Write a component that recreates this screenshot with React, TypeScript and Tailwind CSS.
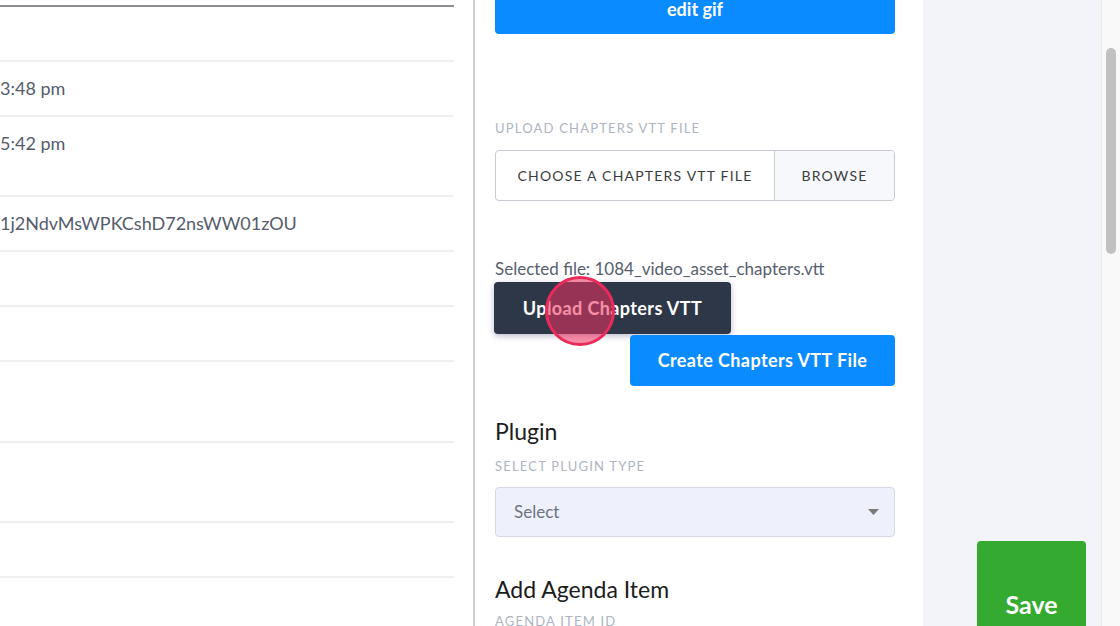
import React from 'react';

const font = { fontFamily: 'Lato, "Noto Sans", sans-serif' };

const rows = [
  { h: 'h-[55px]', text: '' },
  { h: 'h-[55px]', text: '3:48 pm' },
  { h: 'h-[80px]', text: '5:42 pm' },
  { h: 'h-[55px]', text: '1j2NdvMsWPKCshD72nsWW01zOU' },
  { h: 'h-[55px]', text: '' },
  { h: 'h-[55px]', text: '' },
  { h: 'h-[81px]', text: '' },
  { h: 'h-[80px]', text: '' },
  { h: 'h-[55px]', text: '' },
  { h: 'h-[55px]', text: '' }
];

const Label = ({ children }: { children: React.ReactNode }) => (
  <div className="text-[13px] leading-4 tracking-[1.2px] text-[#aeb5c0] uppercase">
    {children}
  </div>
);

export default function App() {
  return (
    <div
      className="relative flex h-[626px] w-[1120px] overflow-hidden bg-white"
      style={font}
    >
      {/* table column */}
      <div className="w-[454px] shrink-0 pt-[5px]">
        <div className="border-t-2 border-[#8a8d91]">
          {rows.map((r, i) => (
            <div
              key={i}
              className={`${r.h} border-b-2 border-[#eef0f2] pt-[13px] text-[18px] leading-[26px] text-[#555c6b]`}
            >
              {r.text}
            </div>
          ))}
        </div>
      </div>

      <div className="w-[19px] shrink-0" />
      <div className="w-[2px] shrink-0 bg-[#c9cfd0]" />

      {/* form column */}
      <div className="w-[448px] shrink-0 pl-[20px] pr-[28px]">
        <button className="mt-[-16px] flex h-[50px] w-full items-center justify-center rounded-[4px] bg-[#0a8bff] pb-[1px] text-[18px] leading-5 font-bold text-white">
          edit gif
        </button>

        <div className="mt-[86px]">
          <Label>Upload chapters VTT file</Label>
        </div>
        <div className="mt-[14px] flex h-[51px] overflow-hidden rounded-[4px] border border-[#c8cbd1] text-[14px] tracking-[1.2px] text-[#3b3d40]">
          <div className="flex w-[279px] items-center justify-center border-r border-[#c8cbd1]">
            CHOOSE A CHAPTERS VTT FILE
          </div>
          <div className="flex flex-1 items-center justify-center bg-[#f7f8fc]">
            BROWSE
          </div>
        </div>

        <div className="mt-[58px] text-[17px] leading-5 text-[#585e6d]">
          Selected file: 1084_video_asset_chapters.vtt
        </div>
        <button className="mt-[3px] ml-[-1px] flex h-[52px] w-[237px] items-center justify-center rounded-[4px] bg-[#2d3748] text-[18px] font-bold tracking-[0.4px] text-white shadow-[0_2px_6px_rgba(60,60,120,0.35)]">
          Upload Chapters VTT
        </button>
        <div className="flex justify-end">
          <button className="mt-[1px] flex h-[51px] w-[265px] items-center justify-center rounded-[4px] bg-[#0a8bff] text-[18px] font-bold tracking-[0.4px] text-white">
            Create Chapters VTT File
          </button>
        </div>

        <div className="mt-[31px] text-[23px] leading-7 text-[#1c1c1c]">Plugin</div>
        <div className="mt-[13px]">
          <Label>Select plugin type</Label>
        </div>
        <div className="mt-[13px] flex h-[50px] items-center justify-between rounded-[4px] border border-[#d6dae4] bg-[#eef1fc] pl-[18px] pr-[15px] text-[17px] text-[#6e7480]">
          <span>Select</span>
          <svg width="11" height="6" viewBox="0 0 11 6">
            <path d="M0 0h11L5.5 6z" fill="#7a7a7a" />
          </svg>
        </div>

        <div className="mt-[38px] text-[23px] leading-7 text-[#1c1c1c]">
          Add Agenda Item
        </div>
        <div className="mt-[10px]">
          <Label>Agenda item ID</Label>
        </div>
      </div>

      {/* grey side column */}
      <div className="flex-1 bg-[#f3f4fa] pl-[54px] pt-[541px]">
        <button className="flex h-[128px] w-[109px] items-center justify-center rounded-[4px] bg-[#34aa31] text-[25px] font-bold text-white">
          Save
        </button>
      </div>

      {/* scrollbar */}
      <div className="w-[19px] shrink-0 border-l border-[#ececec] bg-[#f9f9f9] pl-[4px] pt-[48px]">
        <div className="h-[206px] w-[10px] rounded-full bg-[#c1c1c1]" />
      </div>

      {/* click cursor highlight */}
      <div className="pointer-events-none absolute left-[545px] top-[276px] h-[70px] w-[70px] rounded-full border-[3px] border-[#ea2a5b] bg-[rgba(238,50,95,0.55)]" />
    </div>
  );
}
